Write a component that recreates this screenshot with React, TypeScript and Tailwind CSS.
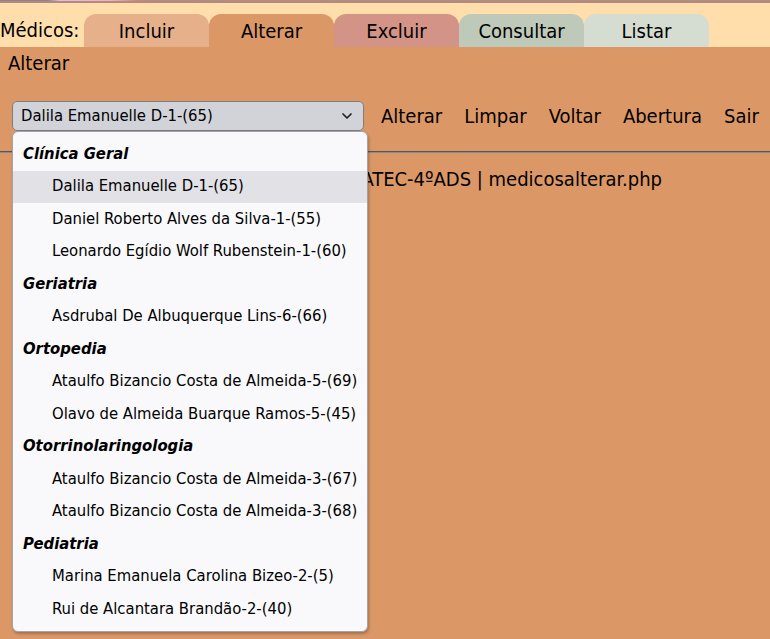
import { ChevronDown } from "lucide-react";

const tabs = [
  { label: "Incluir", bg: "bg-[#E5B08A]" },
  { label: "Alterar", bg: "bg-[#DB9866]" },
  { label: "Excluir", bg: "bg-[#D39387]" },
  { label: "Consultar", bg: "bg-[#BFC9B9]" },
  { label: "Listar", bg: "bg-[#D5DCD1]" },
];

const groups = [
  {
    name: "Clínica Geral",
    items: [
      "Dalila Emanuelle D-1-(65)",
      "Daniel Roberto Alves da Silva-1-(55)",
      "Leonardo Egídio Wolf Rubenstein-1-(60)",
    ],
  },
  { name: "Geriatria", items: ["Asdrubal De Albuquerque Lins-6-(66)"] },
  {
    name: "Ortopedia",
    items: [
      "Ataulfo Bizancio Costa de Almeida-5-(69)",
      "Olavo de Almeida Buarque Ramos-5-(45)",
    ],
  },
  {
    name: "Otorrinolaringologia",
    items: [
      "Ataulfo Bizancio Costa de Almeida-3-(67)",
      "Ataulfo Bizancio Costa de Almeida-3-(68)",
    ],
  },
  {
    name: "Pediatria",
    items: [
      "Marina Emanuela Carolina Bizeo-2-(5)",
      "Rui de Alcantara Brandão-2-(40)",
    ],
  },
];

const links = ["Alterar", "Limpar", "Voltar", "Abertura", "Sair"];

const selected = "Dalila Emanuelle D-1-(65)";

function MedicoSelect() {
  return (
    <div className="relative">
      <div className="flex h-[30px] w-[352px] items-center justify-between rounded-[5px] border border-[#7d7d80] bg-[#D1D3D8] pl-[8px] pr-[8px] text-[16.5px] text-black">
        <span>{selected}</span>
        <ChevronDown size={16} strokeWidth={2.6} className="text-[#222]" />
      </div>

      {/* opened option list */}
      <div className="absolute left-0 top-[30px] z-10 w-[356px] rounded-[6px] border border-[#a3a3a8] bg-[#F9F9FB] pb-[5px] pt-[6px] shadow-[1px_2px_3px_rgba(0,0,0,0.25)]">
        {groups.map((g) => (
          <div key={g.name}>
            <div className="flex h-[32.5px] items-center pl-[10px] text-[16.5px] font-bold italic text-black">
              {g.name}
            </div>
            {g.items.map((it) => (
              <div
                key={it}
                className={`flex h-[32.5px] items-center pl-[39px] text-[16.5px] text-black ${
                  it === selected ? "bg-[#E1E1E6]" : ""
                }`}
              >
                {it}
              </div>
            ))}
          </div>
        ))}
      </div>
    </div>
  );
}

export default function App() {
  return (
    <div
      className="flex h-[639px] flex-col overflow-hidden bg-[#FFDEAB] text-black"
      style={{ fontFamily: '"DejaVu Sans Condensed", "DejaVu Sans", sans-serif' }}
    >
      <div className="h-[3px] w-full border-b-2 border-[#B38A80] bg-[linear-gradient(90deg,#8d8290_0px,#8d8290_48px,#e7b9e8_60px,#f0b0c8_110px,#c98a76_137px,#b58c82_150px)]" />

      <div className="mt-[11px] flex h-[33px] items-end">
        <span className="w-[84px] pb-[3px] text-[20px] leading-[28px]">Médicos:</span>
        {tabs.map((t) => (
          <div
            key={t.label}
            className={`flex h-[33px] w-[125px] items-center justify-center rounded-t-[12px] text-[20px] ${t.bg}`}
          >
            {t.label}
          </div>
        ))}
      </div>

      <div className="flex-1 bg-[#DB9866]">
        <div className="pl-[8px] pt-[4px] text-[20px] leading-[24px]">Alterar</div>

        <div className="mt-[26px] flex items-center pl-[12px]">
          <MedicoSelect />
          <nav className="ml-[17px] flex gap-[22px] text-[20px]">
            {links.map((l) => (
              <span key={l}>{l}</span>
            ))}
          </nav>
        </div>

        <hr className="mt-[20px] border-t-[1px] border-b-[1px] border-t-[#555] border-b-[#8a8a8a]" />

        <p className="mt-[11px] pl-[99px] text-[20px]">
          Sistema de Clínica Médica - FATEC-4ºADS | medicosalterar.php
        </p>
      </div>
    </div>
  );
}
